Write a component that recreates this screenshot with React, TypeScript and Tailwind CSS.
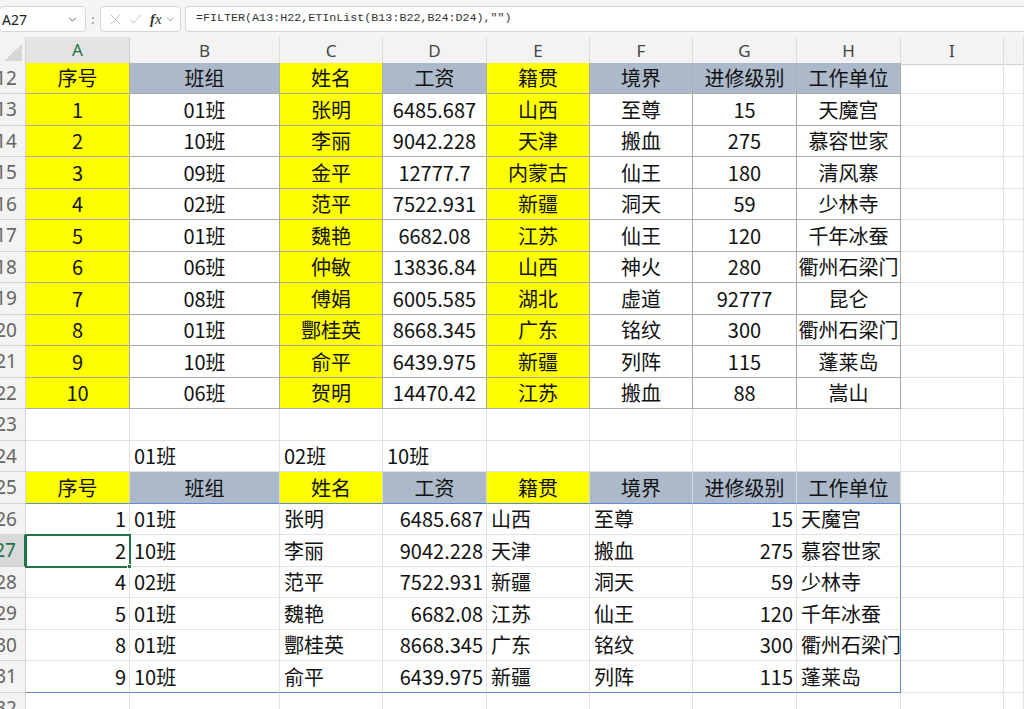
import React from "react";
import { ChevronDown, X, Check } from "lucide-react";

const COLS =
  "grid grid-cols-[26px_104px_150px_103px_104px_103px_103px_104px_104px_103px_1fr]";
const LETTERS = ["A", "B", "C", "D", "E", "F", "G", "H", "I", ""];
const HEAD = ["序号", "班组", "姓名", "工资", "籍贯", "境界", "进修级别", "工作单位"];

const SOURCE: (string | number)[][] = [
  [1, "01班", "张明", "6485.687", "山西", "至尊", 15, "天魔宫"],
  [2, "10班", "李丽", "9042.228", "天津", "搬血", 275, "慕容世家"],
  [3, "09班", "金平", "12777.7", "内蒙古", "仙王", 180, "清风寨"],
  [4, "02班", "范平", "7522.931", "新疆", "洞天", 59, "少林寺"],
  [5, "01班", "魏艳", "6682.08", "江苏", "仙王", 120, "千年冰蚕"],
  [6, "06班", "仲敏", "13836.84", "山西", "神火", 280, "衢州石梁门"],
  [7, "08班", "傅娟", "6005.585", "湖北", "虚道", 92777, "昆仑"],
  [8, "01班", "酆桂英", "8668.345", "广东", "铭纹", 300, "衢州石梁门"],
  [9, "10班", "俞平", "6439.975", "新疆", "列阵", 115, "蓬莱岛"],
  [10, "06班", "贺明", "14470.42", "江苏", "搬血", 88, "嵩山"],
];

const FILTERED = [0, 1, 3, 4, 7, 8].map((i) => SOURCE[i]);

// columns A, C, E are filled yellow in both blocks
const isYellow = (c: number) => c === 0 || c === 2 || c === 4;

function RowHead({ n, selected }: { n: number; selected?: boolean }) {
  return (
    <div
      className={
        "flex items-center justify-end overflow-hidden whitespace-nowrap pr-[8px] text-[19px] font-['Noto_Sans',sans-serif] border-b " +
        (selected
          ? "bg-[#d9d9d9] text-[#217346] border-r-2 border-r-[#217346] border-b-[#d0d0d0]"
          : "bg-[#f3f3f3] text-[#666] border-r border-[#d4d4d4]")
      }
    >
      {n}
    </div>
  );
}

function Cell({
  children,
  className = "",
}: {
  children?: React.ReactNode;
  className?: string;
}) {
  return (
    <div
      className={
        "flex items-center whitespace-nowrap text-[20px] text-[#111] font-['Noto_Sans_CJK_SC',sans-serif] border-r border-b " +
        className
      }
    >
      {children}
    </div>
  );
}

function rowH(n: number) {
  return n % 2 === 0 ? "h-[31px]" : "h-[32px]";
}

function EmptyRow({ n }: { n: number }) {
  return (
    <div className={COLS + " " + rowH(n)}>
      <RowHead n={n} />
      {LETTERS.map((_, i) => (
        <Cell key={i} className="border-[#e1e1e1]" />
      ))}
    </div>
  );
}

export default function App() {
  return (
    <div className="w-[1024px] h-[709px] overflow-hidden bg-white select-none">
      {/* formula bar */}
      <div className="h-[37px] bg-[#f5f5f5] flex items-start pt-[6px] font-['Noto_Sans',sans-serif]">
        <div className="w-[87px] h-[26px] bg-white border border-[#d6d6d6] rounded-[4px] flex items-center justify-between pl-[2px] pr-[6px] ml-[-1px]">
          <span className="text-[14px] text-[#222]">A27</span>
          <ChevronDown size={13} strokeWidth={1.6} className="text-[#555]" />
        </div>
        <div className="flex flex-col gap-[3px] self-center mt-[-3px] ml-[6px] mr-[6px]">
          <span className="w-[2px] h-[2px] bg-[#999] rounded-full" />
          <span className="w-[2px] h-[2px] bg-[#999] rounded-full" />
        </div>
        <div className="w-[81px] h-[26px] bg-white border border-[#d6d6d6] rounded-[4px] flex items-center pl-[6px] gap-[3px]">
          <X size={17} strokeWidth={1.2} className="text-[#b5b5b5]" />
          <Check size={17} strokeWidth={1.2} className="text-[#b5b5b5]" />
          <span className="ml-[3px] text-[15px] italic font-['Liberation_Serif',serif] text-[#333]">
            <span className="font-semibold">f</span>x
          </span>
          <ChevronDown size={11} strokeWidth={1.6} className="text-[#666]" />
        </div>
        <div className="flex-1 ml-[4px] h-[26px] bg-white border border-[#d6d6d6] rounded-l-[4px] border-r-0 flex items-center pl-[10px]">
          <span className="text-[11.7px] text-[#333] font-['Liberation_Mono',monospace]">
            =FILTER(A13:H22,ETInList(B13:B22,B24:D24),"")
          </span>
        </div>
      </div>

      {/* column headers */}
      <div className={COLS + " h-[26px]"}>
        <div className="bg-[#f3f3f3] border-r border-b border-[#d4d4d4] flex items-end justify-end pr-[3px] pb-[3px]">
          <svg width="18" height="17" viewBox="0 0 18 17">
            <polygon points="0,17 18,17 18,0" fill="#d6d6d6" />
          </svg>
        </div>
        {LETTERS.map((l, i) => (
          <div
            key={i}
            className={
              "flex items-center justify-center text-[17px] font-['Noto_Sans',sans-serif] border-r " +
              (i === 0
                ? "bg-[#e3e3e3] text-[#217346] border-[#d4d4d4] border-b-2 border-b-[#217346]"
                : "bg-[#f3f3f3] text-[#444] border-[#dcdcdc] border-b border-b-[#cfcfcf]")
            }
          >
            {l}
          </div>
        ))}
      </div>

      {/* source block, rows 12-22 */}
      <div className={COLS + " " + rowH(12)}>
        <RowHead n={12} />
        {HEAD.map((h, c) => (
          <Cell
            key={c}
            className={
              "justify-center border-[#acacac] " +
              (isYellow(c) ? "bg-[#ffff00]" : "bg-[#acb9ca]")
            }
          >
            {h}
          </Cell>
        ))}
        <Cell className="border-[#e1e1e1]" />
        <Cell className="border-[#e1e1e1]" />
      </div>
      {SOURCE.map((r, ri) => (
        <div key={ri} className={COLS + " " + rowH(13 + ri)}>
          <RowHead n={13 + ri} />
          {r.map((v, c) => (
            <Cell
              key={c}
              className={
                "justify-center border-[#acacac] " +
                (isYellow(c) ? "bg-[#ffff00]" : "")
              }
            >
              {v}
            </Cell>
          ))}
          <Cell className="border-[#e1e1e1]" />
          <Cell className="border-[#e1e1e1]" />
        </div>
      ))}

      <EmptyRow n={23} />

      {/* criteria row */}
      <div className={COLS + " " + rowH(24)}>
        <RowHead n={24} />
        <Cell className="border-[#e1e1e1]" />
        <Cell className="border-[#e1e1e1] pl-[4px]">01班</Cell>
        <Cell className="border-[#e1e1e1] pl-[4px]">02班</Cell>
        <Cell className="border-[#e1e1e1] pl-[4px]">10班</Cell>
        {[0, 1, 2, 3, 4, 5].map((i) => (
          <Cell key={i} className="border-[#e1e1e1]" />
        ))}
      </div>

      {/* result header */}
      <div className={COLS + " " + rowH(25)}>
        <RowHead n={25} />
        {HEAD.map((h, c) => (
          <Cell
            key={c}
            className={
              "justify-center border-r-[#d8d8d8] border-b-[#5b8bd9] " +
              (isYellow(c) ? "bg-[#ffff00]" : "bg-[#acb9ca]")
            }
          >
            {h}
          </Cell>
        ))}
        <Cell className="border-[#e1e1e1]" />
        <Cell className="border-[#e1e1e1]" />
      </div>

      {/* spilled FILTER result, rows 26-31 */}
      {FILTERED.map((r, ri) => {
        const n = 26 + ri;
        const last = ri === FILTERED.length - 1;
        return (
          <div key={ri} className={COLS + " " + rowH(n)}>
            <RowHead n={n} selected={n === 27} />
            {r.map((v, c) => (
              <Cell
                key={c}
                className={
                  (typeof v === "number" || c === 3
                    ? "justify-end pr-[3px] "
                    : "pl-[4px] ") +
                  (c === 7 ? "border-r-[#5b8bd9] " : "border-r-[#e1e1e1] ") +
                  (last ? "border-b-[#5b8bd9] " : "border-b-[#e1e1e1] ") +
                  (n === 27 && c === 0
                    ? "relative outline-2 outline-[#217346] -outline-offset-1"
                    : "")
                }
              >
                {v}
                {n === 27 && c === 0 && (
                  <span className="absolute right-[-3px] bottom-[-3px] w-[5px] h-[5px] bg-[#217346] border border-white" />
                )}
              </Cell>
            ))}
            <Cell className="border-[#e1e1e1]" />
            <Cell className="border-[#e1e1e1]" />
          </div>
        );
      })}

      <EmptyRow n={32} />
    </div>
  );
}
